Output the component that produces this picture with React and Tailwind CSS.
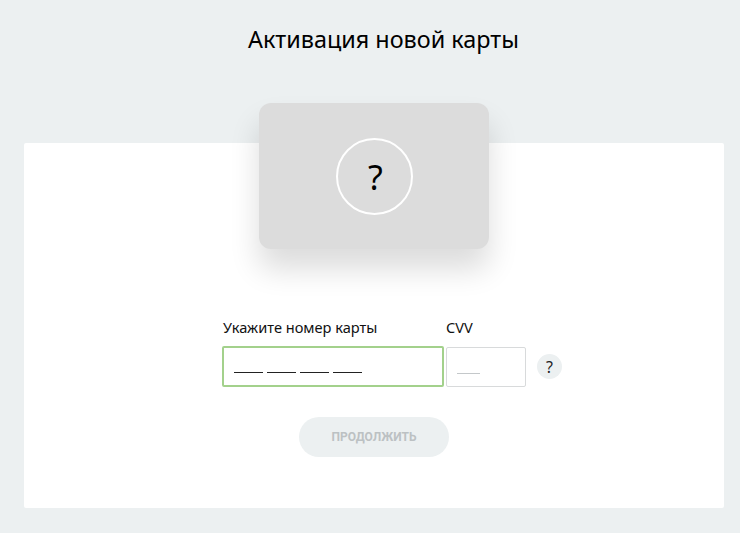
import React from "react";

const App = () => {
  return (
    <div className="flex flex-col w-[740px] h-[533px] overflow-hidden bg-[#ecf0f1] font-['Noto_Sans',sans-serif] text-black">
      <h1 className="mt-[22px] ml-[248px] h-[34px] text-[23.4px] leading-[34px] font-normal whitespace-nowrap">
        Активация новой карты
      </h1>

      <div className="mt-[87px] ml-[24px] w-[700px] h-[365px] bg-white rounded-[2px] flex flex-col items-center">
        <div className="-mt-[40px] w-[230px] h-[146px] shrink-0 rounded-[12px] bg-[#dcdcdc] shadow-[0_20px_30px_rgba(0,0,0,0.14)] flex items-center justify-center">
          <div className="w-[77px] h-[77px] rounded-full border-2 border-white flex items-center justify-center text-[34px] leading-none pt-[2px] pl-[3px]">
            ?
          </div>
        </div>

        <div className="mt-[68px] self-start ml-[198px] w-[341px]">
          <div className="flex pl-px text-[14.6px] leading-[20px] h-[20px] text-[#111]">
            <span className="w-[223px] whitespace-nowrap">Укажите номер карты</span>
            <span>CVV</span>
          </div>
          <div className="flex items-center mt-[9px]">
            <div className="w-[222px] h-[41px] border-2 border-[#a3d18c] rounded-[2px] pl-[10px] pt-[24px]">
              <div className="flex gap-[4px]">
                <span className="w-[29px] h-px bg-[#222]" />
                <span className="w-[29px] h-px bg-[#222]" />
                <span className="w-[29px] h-px bg-[#222]" />
                <span className="w-[29px] h-px bg-[#222]" />
              </div>
            </div>
            <div className="ml-[2px] w-[80px] h-[40px] border border-[#d8dadb] rounded-[2px] pl-[10px] pt-[25px]">
              <span className="block w-[23px] h-px bg-[#c4c8ca]" />
            </div>
            <div className="ml-[11px] w-[25px] h-[25px] rounded-full bg-[#ecf0f1] flex items-center justify-center text-[16px] leading-none text-[#222]">
              ?
            </div>
          </div>
        </div>

        <button className="mt-[30px] w-[150px] h-[40px] rounded-full bg-[#ecf0f1] text-[#bcc1c3] text-[12px] font-bold uppercase font-['Roboto',sans-serif]">
          Продолжить
        </button>
      </div>
    </div>
  );
};

export default App;
